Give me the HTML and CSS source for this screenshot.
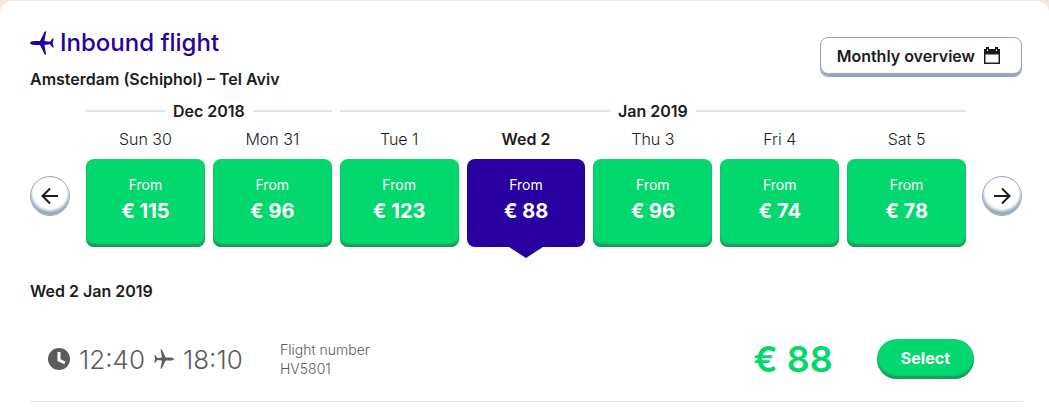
FILE: index.html
```html
<!DOCTYPE html>
<html lang="en">
<head>
    <meta charset="UTF-8">
    <meta name="viewport" content="width=device-width, initial-scale=1.0">
    <title>Inbound flight</title>
    <link rel="stylesheet" href="styles.css">
</head>
<body>
    <main class="panel">
        <header class="panel-header">
            <div>
                <h1 class="title">
                    <svg class="title-icon" viewBox="0 0 24 24" aria-hidden="true">
                        <path d="M0 12c0-1 2-1.900 4-1.900h6L14.500 1c.4-.9 1.800-.9 1.600 0L14.400 10.100l5.600.7L22.500 7.500h1.200L22.700 12l1 4.500h-1.200L20 13.200l-5.600.7L16.100 23c.2.900-1.200.9-1.600 0L10 13.900H4c-2 0-4-.9-4-1.900z"/>
                    </svg>
                    Inbound flight
                </h1>
                <p class="route">Amsterdam (Schiphol) – Tel Aviv</p>
            </div>
            <button class="overview-btn" type="button">
                Monthly overview
                <svg class="calendar-icon" viewBox="0 0 18 18" aria-hidden="true">
                    <path fill-rule="evenodd" d="M1 2h2V0h3v2h6V0h3v2h2v15H1zM2.500 7.500v8h13v-8zM4 2.500V4h1V2.500zM13 2.500V4h1V2.500z"/>
                </svg>
            </button>
        </header>

        <section class="calendar">
            <button class="arrow-btn" type="button" aria-label="Previous days">
                <svg viewBox="0 0 18 18"><path d="M17 9H2M9 1.500L1.500 9L9 16.500"/></svg>
            </button>
            <div class="days">
                <div class="month month-dec">Dec 2018</div>
                <div class="month month-jan">Jan 2019</div>

                <span class="day-name">Sun 30</span>
                <span class="day-name">Mon 31</span>
                <span class="day-name">Tue 1</span>
                <span class="day-name active">Wed 2</span>
                <span class="day-name">Thu 3</span>
                <span class="day-name">Fri 4</span>
                <span class="day-name">Sat 5</span>

                <button class="day" type="button">From <strong>€ 115</strong></button>
                <button class="day" type="button">From <strong>€ 96</strong></button>
                <button class="day" type="button">From <strong>€ 123</strong></button>
                <button class="day selected" type="button">From <strong>€ 88</strong></button>
                <button class="day" type="button">From <strong>€ 96</strong></button>
                <button class="day" type="button">From <strong>€ 74</strong></button>
                <button class="day" type="button">From <strong>€ 78</strong></button>
            </div>
            <button class="arrow-btn" type="button" aria-label="Next days">
                <svg viewBox="0 0 18 18"><path d="M1 9H16M9 1.500L16.500 9L9 16.500"/></svg>
            </button>
        </section>

        <h2 class="date">Wed 2 Jan 2019</h2>

        <div class="flight">
            <div class="times">
                <svg class="clock-icon" viewBox="0 0 22 22" aria-hidden="true">
                    <circle cx="11" cy="11" r="11"/>
                    <path d="M11 4v8l6 3"/>
                </svg>
                <time>12:40</time>
                <svg class="plane-icon" viewBox="0 0 24 24" aria-hidden="true">
                    <path d="M24 12c0-1-2-1.900-4-1.900h-6L9.500 1C9.100.1 7.700.1 7.900 1l1.700 9.100-5.600.7L1.500 7.500H.3L1.300 12l-1 4.500h1.200L4 13.200l5.600.7L7.900 23c-.2.900 1.200.9 1.600 0l4.500-9.100h6c2 0 4-.9 4-1.900z"/>
                </svg>
                <time>18:10</time>
            </div>
            <div class="flight-number">Flight number<br>HV5801</div>
            <div class="flight-price">€ 88</div>
            <button class="select-btn" type="button">Select</button>
        </div>
    </main>
</body>
</html>
```
FILE: styles.css
```css
* {
    box-sizing: border-box;
}
body {
    margin: 0;
    padding-top: 1px;
    background-color: #f4e6db;
    color: #1c1c1c;
    font-family: Inter, "Open Sans", sans-serif;
    font-size: 16px;
}
button {
    font-family: inherit;
    color: inherit;
    border: none;
    cursor: pointer;
}
.panel {
    min-height: calc(100vh - 1px);
    padding: 28px 27px 0 30px;
    background-color: #fff;
    border-radius: 12px 12px 0 0;
}
.panel-header {
    display: flex;
    justify-content: space-between;
    align-items: flex-start;
}
.title {
    display: flex;
    align-items: center;
    gap: 6px;
    margin: 0;
    color: #2800a0;
    font-size: 24px;
    line-height: 28px;
    font-weight: 500;
}
.title-icon {
    width: 24px;
    height: 24px;
    fill: #2800a0;
}
.route {
    margin: 12px 0 0;
    line-height: 20px;
    font-weight: 600;
}
.overview-btn {
    display: flex;
    align-items: center;
    gap: 8px;
    height: 40px;
    margin-top: 8px;
    padding: 0 20px 3px 16px;
    background-color: #fff;
    border: 1px solid #94a5bb;
    border-radius: 8px;
    box-shadow: inset 0 -3px 1px #94a5bb;
    font-size: 16px;
    font-weight: 600;
}
.calendar-icon {
    width: 18px;
    height: 18px;
    fill: #1c1c1c;
}
.calendar {
    display: flex;
    align-items: flex-end;
    gap: 16px;
    margin-top: 12px;
}
.arrow-btn {
    display: flex;
    align-items: center;
    justify-content: center;
    flex: none;
    width: 40px;
    height: 40px;
    margin-bottom: 31px;
    padding: 0;
    background-color: #fff;
    border: 1px solid #94a5bb;
    border-radius: 50%;
    box-shadow: inset 0 -4px 3px #94a5bb;
}
.arrow-btn svg {
    width: 18px;
    height: 18px;
    fill: none;
    stroke: #1c1c1c;
    stroke-width: 2;
}
.days {
    display: grid;
    flex: 1;
    grid-template-columns: repeat(7, 1fr);
    column-gap: 8px;
}
.month {
    display: flex;
    align-items: center;
    gap: 8px;
    line-height: 20px;
    font-weight: 600;
}
.month::before,
.month::after {
    content: "";
    flex: 1;
    height: 2px;
    background-color: #e4e4e4;
}
.month-dec {
    grid-column: span 2;
}
.month-jan {
    grid-column: span 5;
}
.day-name {
    padding: 8px 0 10px;
    line-height: 20px;
    font-weight: 300;
    text-align: center;
}
.day-name.active {
    font-weight: 600;
}
.day {
    position: relative;
    height: 88px;
    padding: 0 0 8px;
    background-color: #02d86d;
    border-radius: 8px;
    box-shadow: inset 0 -3px 2px #1f9560;
    color: #fff;
    font-size: 14px;
    line-height: 20px;
}
.day strong {
    display: block;
    margin-top: 4px;
    font-size: 20px;
    line-height: 24px;
    font-weight: 700;
}
.day.selected {
    background-color: #2800a0;
    box-shadow: none;
}
.day.selected::after {
    content: "";
    position: absolute;
    top: 100%;
    left: 50%;
    margin-left: -17px;
    border: 17px solid transparent;
    border-top: 11px solid #2800a0;
    border-bottom: 0;
}
.date {
    margin: 34px 0 0;
    font-size: 16px;
    line-height: 20px;
    font-weight: 600;
}
.flight {
    display: flex;
    align-items: center;
    height: 101px;
    padding: 16px 48px 0 18px;
    border-bottom: 1px solid #e4e4e4;
    color: #5c5c5c;
}
.times {
    display: flex;
    align-items: center;
    gap: 9px;
    width: 232px;
    font-size: 26px;
    font-weight: 300;
}
.clock-icon {
    width: 22px;
    height: 22px;
    fill: #5c5c5c;
}
.clock-icon path {
    fill: none;
    stroke: #fff;
    stroke-width: 3;
}
.plane-icon {
    width: 20px;
    height: 20px;
    fill: #5c5c5c;
}
.flight-number {
    font-size: 14px;
    line-height: 19px;
    font-weight: 300;
}
.flight-price {
    margin-left: auto;
    color: #02d86d;
    font-size: 36px;
    line-height: 40px;
    font-weight: 600;
}
.select-btn {
    height: 40px;
    margin-left: 44px;
    padding: 0 24px 3px;
    background-color: #02d86d;
    border-radius: 20px;
    box-shadow: inset 0 -3px 2px #1f9560;
    color: #fff;
    font-size: 16px;
    font-weight: 700;
}
```
